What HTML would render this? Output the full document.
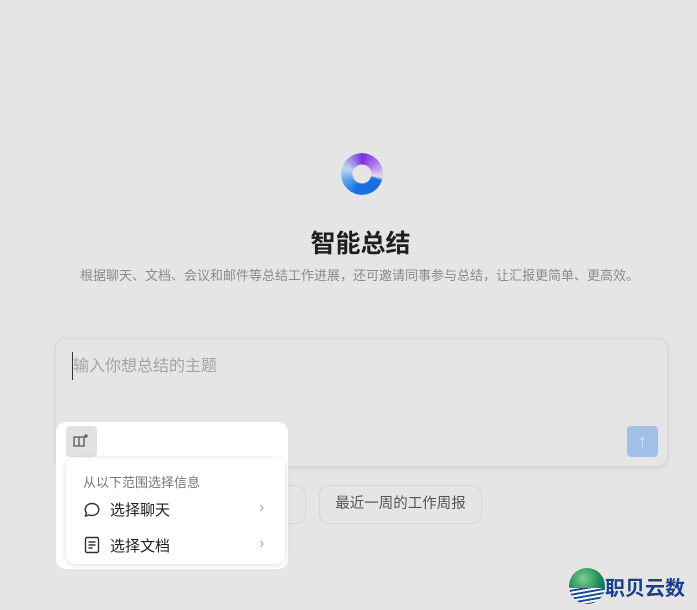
<!DOCTYPE html>
<html><head><meta charset="utf-8"><style>
*{margin:0;padding:0;box-sizing:border-box}
body{width:697px;height:610px;background:#e5e5e5;font-family:"Liberation Sans","Noto Sans CJK SC",sans-serif;position:relative;overflow:hidden}
.abs{position:absolute}
</style></head><body>
<div class="abs" style="left:341px;top:153px;width:42px;height:42px;border-radius:50%;background:conic-gradient(from 200deg,#1a6fe0,#5aa0ea,#c0d8f2 25%,#7a2ee0 45%,#b07ee8 60%,#e8d8f4 72%,#1a6fe0 75%);-webkit-mask:radial-gradient(circle,transparent 9px,#000 10px);mask:radial-gradient(circle,transparent 9px,#000 10px)"></div>
<div class="abs" style="left:12px;width:697px;top:224px;text-align:center;font-size:25px;font-weight:bold;color:#1f1f1f">智能总结</div>
<div class="abs" style="left:11px;width:697px;top:265px;text-align:center;font-size:13px;color:#8a8a8a;white-space:nowrap">根据聊天、文档、会议和邮件等总结工作进展，还可邀请同事参与总结，让汇报更简单、更高效。</div>
<div class="abs" style="left:55px;top:338px;width:613px;height:129px;border:1px solid #d6d6d6;border-radius:10px;background:#e5e5e5;box-shadow:0 2px 6px rgba(0,0,0,.06)"></div>
<div class="abs" style="left:72px;top:352px;width:1px;height:28px;background:#333"></div>
<div class="abs" style="left:73px;top:352px;font-size:16px;color:#a3a3a3">输入你想总结的主题</div>
<div class="abs" style="left:627px;top:426px;width:31px;height:31px;border-radius:4px;background:#a2bfe8;color:#dbe6f6;text-align:center;font-size:18px;line-height:31px">↑</div>
<div class="abs" style="left:220px;top:485px;width:86px;height:39px;border:1px solid #d6d6d6;border-radius:10px"></div>
<div class="abs" style="left:319px;top:485px;width:163px;height:39px;border:1px solid #d6d6d6;border-radius:10px;text-align:center;line-height:37px;font-size:14.5px;color:#555">最近一周的工作周报</div>
<div class="abs" style="left:56px;top:422px;width:232px;height:147px;background:#fff;border-radius:10px"></div>
<div class="abs" style="left:66px;top:426px;width:31px;height:31px;border-radius:4px;background:#e2e2e2"></div>
<svg class="abs" style="left:71px;top:431px" width="20" height="20" viewBox="0 0 20 20" fill="none" stroke="#555" stroke-width="1.3"><path d="M3 6h5v9H3zM8 6h5v9H8z"/><path d="M15 3v4M13 5h4"/></svg>
<div class="abs" style="left:66px;top:458px;width:219px;height:106px;background:#fff;border-radius:10px;box-shadow:0 1px 6px rgba(0,0,0,.15)"></div>
<div class="abs" style="left:83px;top:472px;font-size:13px;color:#777">从以下范围选择信息</div>
<svg class="abs" style="left:83px;top:501px" width="18" height="18" viewBox="0 0 18 18" fill="none" stroke="#333" stroke-width="1.4"><path d="M9 2.5c3.8 0 6.8 2.6 6.8 6s-3 6-6.8 6c-1 0-1.9-.2-2.8-.5L2.5 15l1-3.2C2.6 10.9 2.2 9.7 2.2 8.5c0-3.4 3-6 6.8-6z"/></svg>
<div class="abs" style="left:110px;top:499px;font-size:15px;color:#222">选择聊天</div>
<div class="abs" style="left:259px;top:499px;font-size:16px;color:#aaa">›</div>
<svg class="abs" style="left:84px;top:536px" width="16" height="18" viewBox="0 0 16 18" fill="none" stroke="#333" stroke-width="1.4"><rect x="1.5" y="1.5" width="13" height="15" rx="1.5"/><path d="M4.5 6h7M4.5 9h7M4.5 12h4"/></svg>
<div class="abs" style="left:110px;top:535px;font-size:15px;color:#222">选择文档</div>
<div class="abs" style="left:259px;top:535px;font-size:16px;color:#aaa">›</div>
<div class="abs" style="left:569px;top:568px;width:36px;height:36px;border-radius:50%;background:radial-gradient(circle at 40% 30%,#7ad08a,#1a8a5a 50%,#0e4f8a);overflow:hidden"><div style="position:absolute;left:0;top:20px;width:36px;height:16px;background:repeating-linear-gradient(170deg,#fff 0 2px,#1a4f9a 2px 4px)"></div></div>
<div class="abs" style="left:605px;top:572px;font-size:20px;font-weight:bold;color:#1a3f8a">职贝云数</div>
</body></html>
